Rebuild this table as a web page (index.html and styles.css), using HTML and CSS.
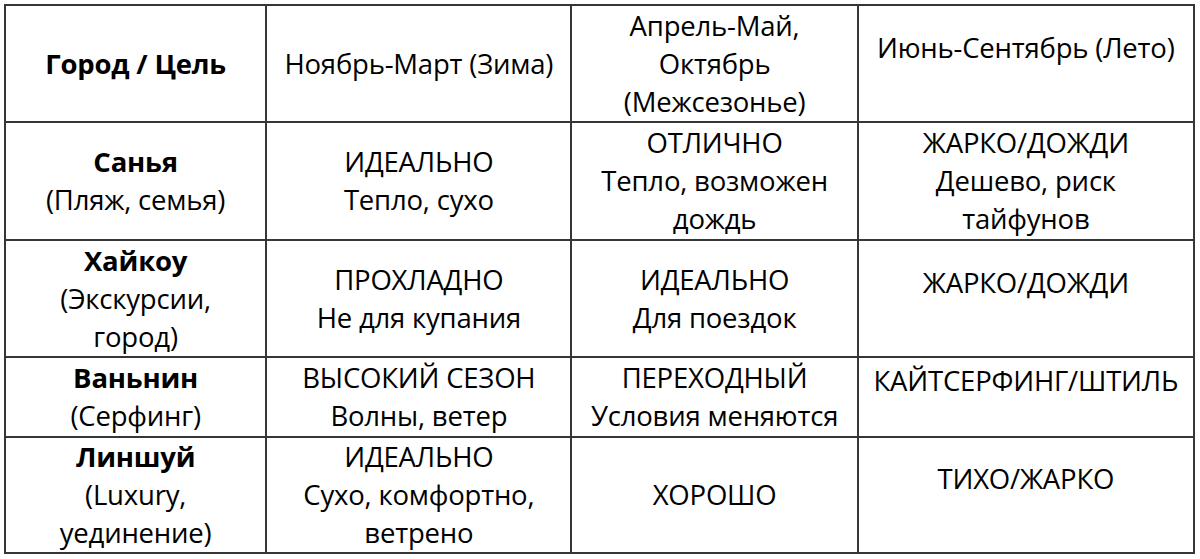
FILE: index.html
```html
<!DOCTYPE html>
<html lang="ru">
<head>
<meta charset="utf-8">
<title>Сезоны</title>
<link rel="stylesheet" href="styles.css">
</head>
<body>
<div class="page">
<table class="seasons">
<colgroup>
<col class="c1"><col class="c2"><col class="c3"><col class="c4">
</colgroup>
<tr class="r1">
<td class="b">Город / Цель</td>
<td>Ноябрь-Март (Зима)</td>
<td>Апрель-Май,<br>Октябрь<br>(Межсезонье)</td>
<td class="tail">Июнь-Сентябрь (Лето)</td>
</tr>
<tr class="r2">
<td><span class="b">Санья</span><br>(Пляж, семья)</td>
<td>ИДЕАЛЬНО<br>Тепло, сухо</td>
<td>ОТЛИЧНО<br>Тепло, возможен<br>дождь</td>
<td>ЖАРКО/ДОЖДИ<br>Дешево, риск<br>тайфунов</td>
</tr>
<tr class="r3">
<td><span class="b">Хайкоу</span><br>(Экскурсии,<br>город)</td>
<td>ПРОХЛАДНО<br>Не для купания</td>
<td>ИДЕАЛЬНО<br>Для поездок</td>
<td class="tail">ЖАРКО/ДОЖДИ</td>
</tr>
<tr class="r4">
<td><span class="b">Ваньнин</span><br>(Серфинг)</td>
<td>ВЫСОКИЙ СЕЗОН<br>Волны, ветер</td>
<td>ПЕРЕХОДНЫЙ<br>Условия меняются</td>
<td class="tail">КАЙТСЕРФИНГ/ШТИЛЬ</td>
</tr>
<tr class="r5">
<td><span class="b">Линшуй</span><br>(Luxury,<br>уединение)</td>
<td>ИДЕАЛЬНО<br>Сухо, комфортно,<br>ветрено</td>
<td>ХОРОШО</td>
<td class="tail">ТИХО/ЖАРКО</td>
</tr>
</table>
</div>
</body>
</html>
```
FILE: styles.css
```css
html, body {
  margin: 0;
  padding: 0;
  background: #ffffff;
}
.page {
  padding: 4px 6px 0 4px;
  font-family: "Open Sans", "Noto Sans", sans-serif;
  color: #000000;
}
.seasons {
  border-collapse: collapse;
  table-layout: fixed;
  width: 1191px;
  font-size: 27.5px;
  line-height: 38px;
  letter-spacing: -0.2px;
}
.c1 { width: 261px; }
.c2 { width: 305px; }
.c3 { width: 286px; }
.c4 { width: 336px; }
.seasons td {
  border: 2px solid #363636;
  text-align: center;
  vertical-align: middle;
  padding: 0 2px;
  white-space: nowrap;
  overflow: hidden;
}
.seasons td.tail {
  padding-bottom: 32px;
}
.b {
  font-weight: 700;
}
.r1 { height: 117px; }
.r2 { height: 118px; }
.r3 { height: 117px; }
.r4 { height: 80px; }
.r5 { height: 116px; }
```
